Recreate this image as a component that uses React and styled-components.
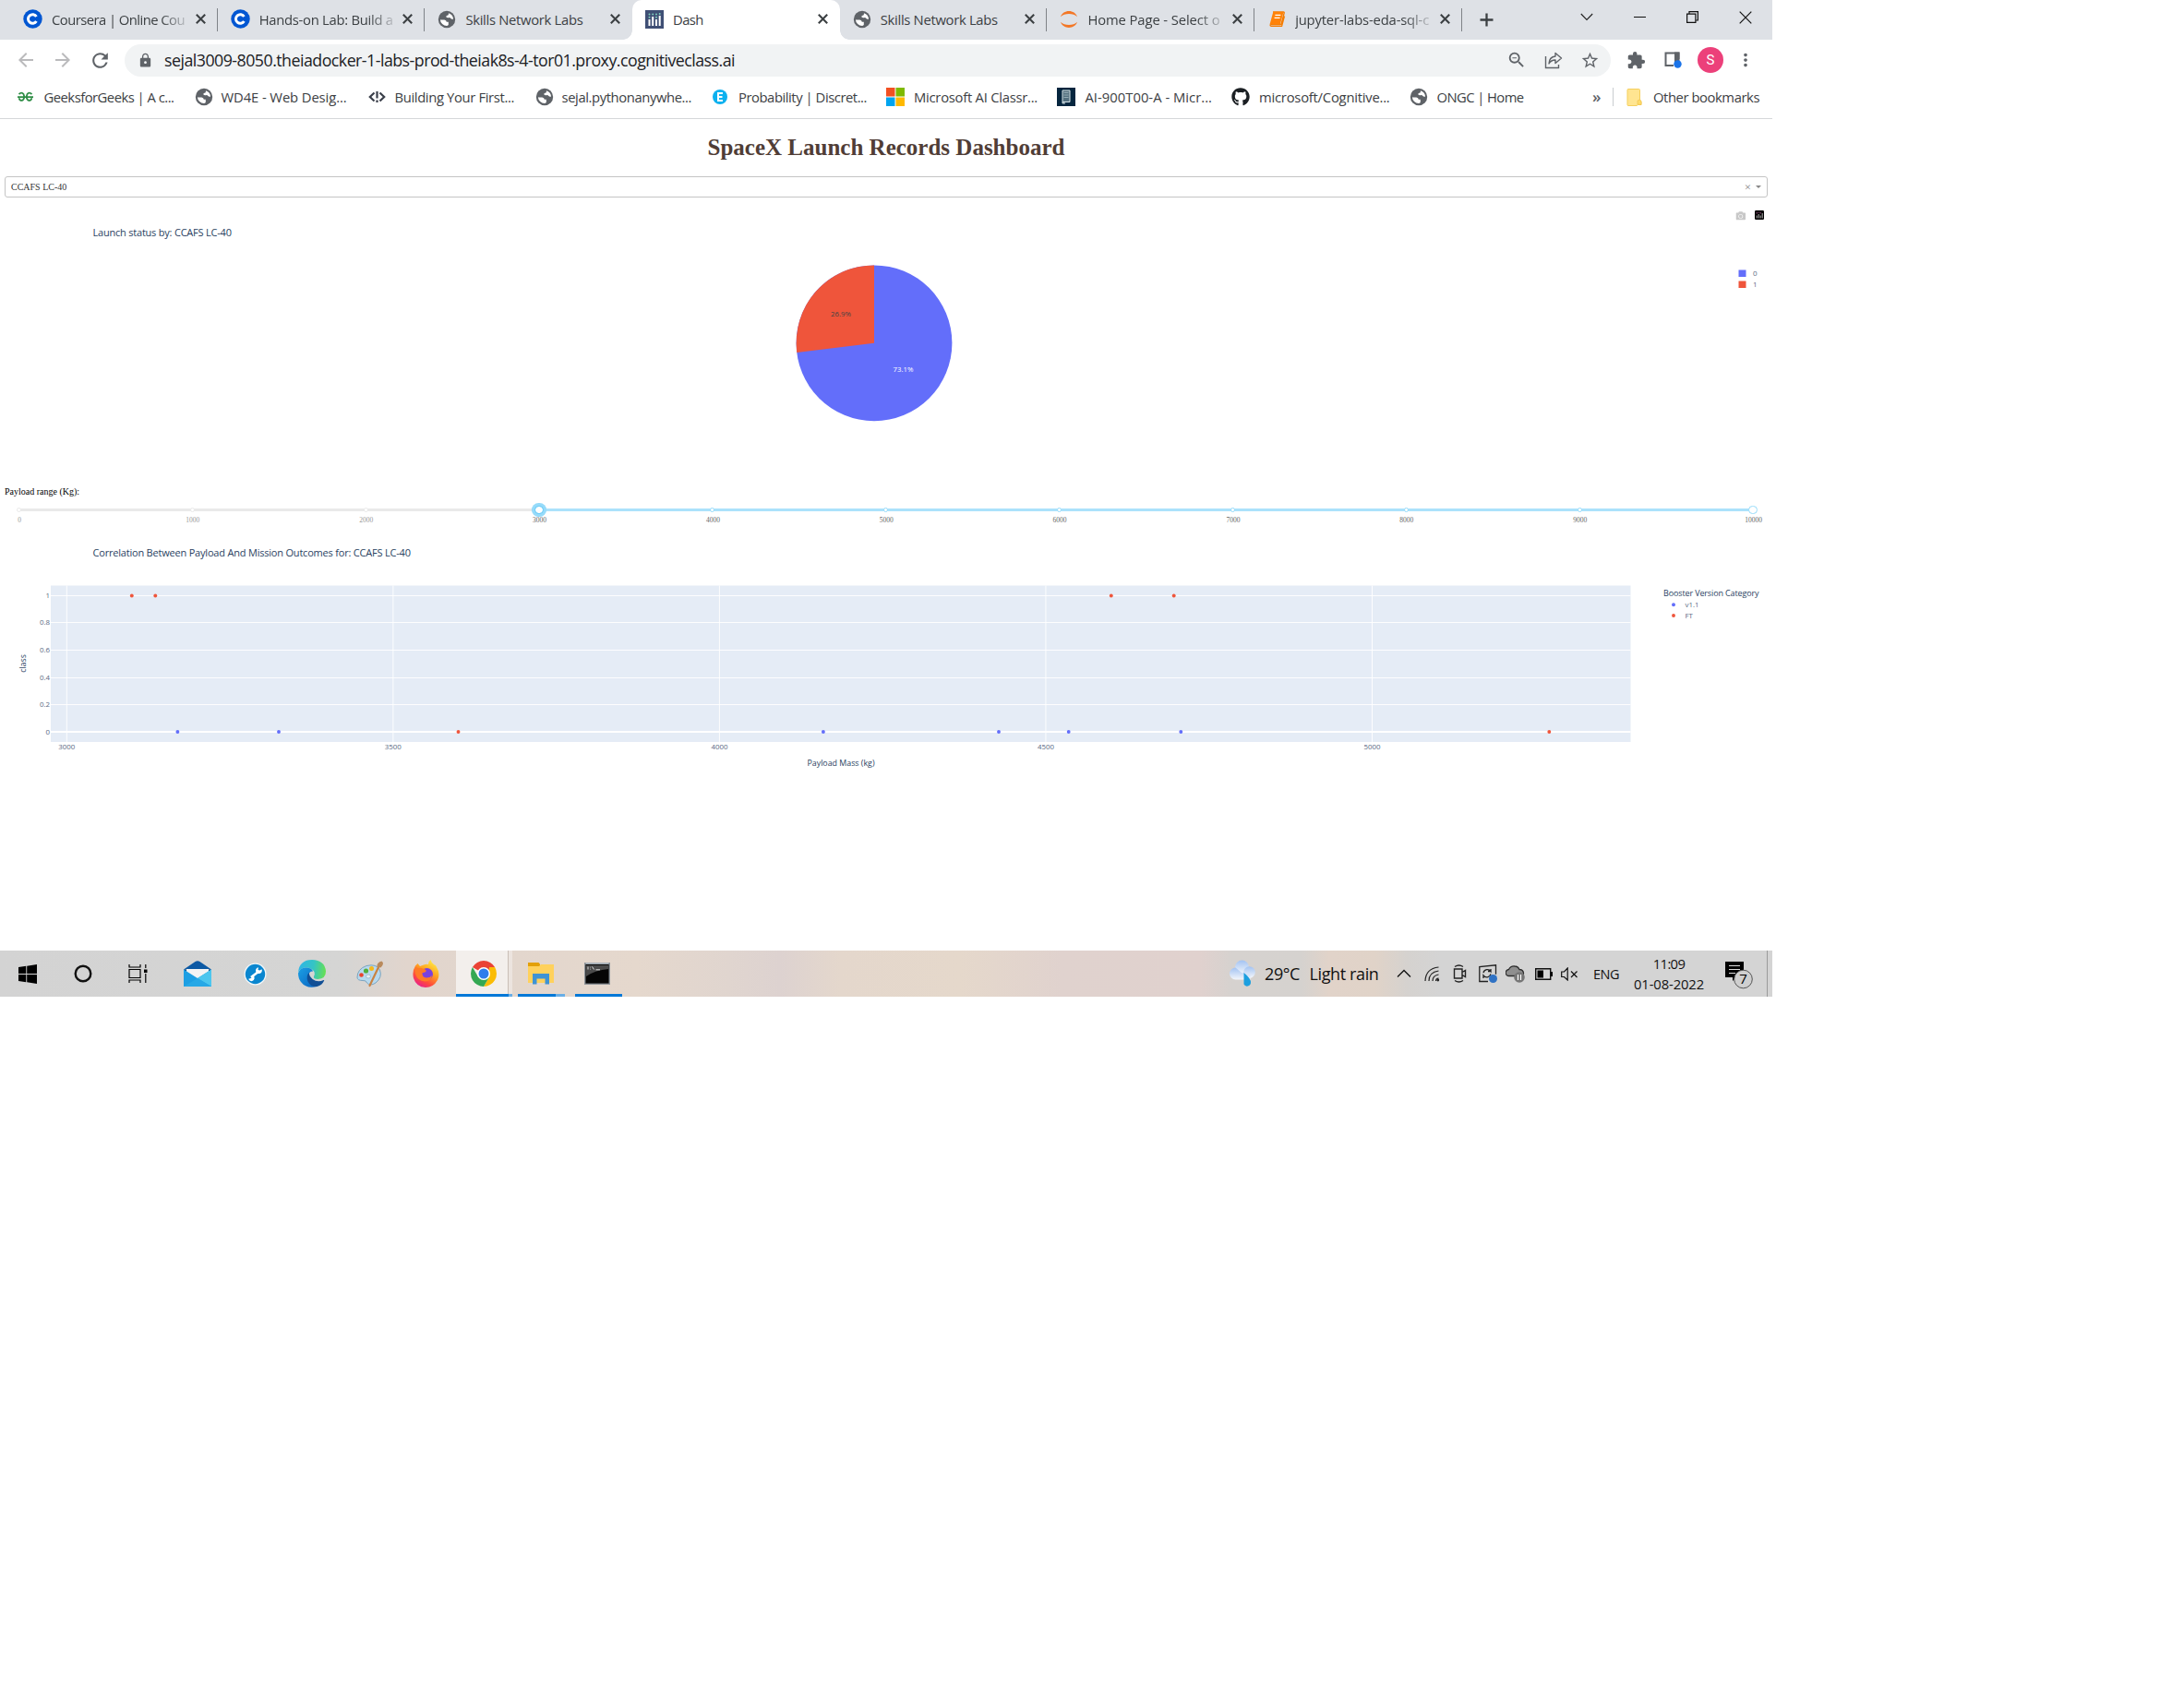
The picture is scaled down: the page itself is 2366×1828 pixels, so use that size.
import React, { useLayoutEffect, useRef, useState } from "react";
import styled, { createGlobalStyle, css } from "styled-components";
import {
  MdArrowBack, MdArrowForward, MdRefresh, MdLock, MdStarBorder,
  MdExtension, MdMoreVert, MdOutlineZoomOut,
} from "react-icons/md";
import { FaGithub, FaCamera } from "react-icons/fa";

const UI = `"Open Sans", "Noto Sans", sans-serif`;
const SERIF = `"Liberation Serif", serif`;

const Global = createGlobalStyle`
  * { box-sizing: border-box; }
  body { margin: 0; background: #fff; font-family: ${UI}; }
  svg { display: block; flex: none; }
`;

const Desktop = styled.div`
  width: 1920px;
  height: 1080px;
  display: flex;
  flex-direction: column;
  background: #fff;
  overflow: hidden;
`;

/* ---------- text that keeps to its column width ---------- */
const FitBox = styled.span`
  display: block;
  flex: none;
  width: ${(p) => p.$w}px;
  white-space: nowrap;
  font-size: ${(p) => p.$size}px;
  color: ${(p) => p.$color || "#3c4043"};
`;
const Glyphs = styled.span`
  display: inline-block;
`;
function FitText({ w, size, color, children }) {
  const ref = useRef(null);
  const [spacing, setSpacing] = useState(0);
  useLayoutEffect(() => {
    const natural = ref.current.getBoundingClientRect().width;
    setSpacing((w - natural) / children.length);
  }, []);
  return (
    <FitBox $w={w} $size={size} $color={color}>
      <Glyphs ref={ref} style={{ letterSpacing: spacing }}>{children}</Glyphs>
    </FitBox>
  );
}

/* ---------- tab strip ---------- */
const TabStrip = styled.div`
  flex: none;
  height: 43px;
  padding-left: 11px;
  display: flex;
  background: #dee1e6;
`;
const Tab = styled.div`
  position: relative;
  width: 224.7px;
  height: 43px;
  padding: 0 10px 2px 14px;
  display: flex;
  align-items: center;
  ${(p) => p.$active && css`
    background: #fff;
    border-radius: 10px 10px 0 0;
    &::before, &::after {
      content: "";
      position: absolute;
      bottom: 0;
      width: 10px;
      height: 10px;
    }
    &::before { left: -10px; background: radial-gradient(circle at 0 0, transparent 9.5px, #fff 10px); }
    &::after { right: -10px; background: radial-gradient(circle at 100% 0, transparent 9.5px, #fff 10px); }
  `}
`;
const TabTitle = styled.div`
  width: 148px;
  margin: 0 6px 0 10px;
  ${(p) => p.$fade && css`
    mask-image: linear-gradient(90deg, #000 118px, rgba(0, 0, 0, 0.25) 144px);
  `}
`;
const TabRule = styled.div`
  position: absolute;
  right: 0;
  top: 9px;
  width: 1px;
  height: 25px;
  background: #7f8388;
`;
const NewTab = styled.div`
  width: 53px;
  padding-bottom: 1px;
  display: grid;
  place-items: center;
`;
const WindowButtons = styled.div`
  margin-left: auto;
  height: 37px;
  display: flex;
`;
const WindowButton = styled.div`
  width: 57.4px;
  display: grid;
  place-items: center;
`;

/* ---------- toolbar ---------- */
const Toolbar = styled.div`
  flex: none;
  height: 44px;
  display: flex;
  align-items: center;
`;
const Nav = styled.div`
  width: 135px;
  padding-left: 15.5px;
  display: flex;
  gap: 16px;
`;
const Omnibox = styled.div`
  width: 1610px;
  height: 35px;
  padding: 0 12px 0 14px;
  border-radius: 18px;
  background: #f1f3f4;
  display: flex;
  align-items: center;
  gap: 12px;
  color: #5f6368;
`;
const OmniActions = styled.div`
  margin-left: auto;
  display: flex;
  align-items: center;
  gap: 19px;
`;
const ToolbarEnd = styled.div`
  padding-left: 17px;
  display: flex;
  align-items: center;
  color: #5f6368;
`;
const SidePanel = styled.div`
  margin-left: 19px;
`;
const Avatar = styled.div`
  width: 28px;
  height: 28px;
  margin: 0 13px 0 17px;
  border-radius: 50%;
  background: #ec407a;
  color: #fff;
  font: 15px Roboto, sans-serif;
  display: grid;
  place-items: center;
`;

/* ---------- bookmarks ---------- */
const Bookmarks = styled.div`
  flex: none;
  height: 42px;
  padding: 0 14px 5px 19px;
  display: flex;
  align-items: center;
  border-bottom: 1px solid #d5d7da;
`;
const Bookmark = styled.div`
  width: ${(p) => p.$w}px;
  flex: none;
  display: flex;
  align-items: center;
`;
const BookmarkIcon = styled.div`
  width: ${(p) => p.$w}px;
  flex: none;
  color: #5f6368;
`;
const Overflow = styled.div`
  width: 10px;
  margin-left: auto;
  font-size: 17px;
  font-weight: 600;
  color: #5f6368;
  line-height: 20px;
`;
const BookmarkRule = styled.div`
  width: 1px;
  height: 20px;
  margin: 0 14px 0 12px;
  background: #c9ccd0;
`;

/* ---------- dashboard ---------- */
const Page = styled.main`
  flex: 1;
  display: flex;
  flex-direction: column;
`;
const Heading = styled.h1`
  margin: 0;
  height: 62px;
  padding-top: 16px;
  text-align: center;
  font: bold 25px/30px ${SERIF};
  color: #503d36;
`;
const Dropdown = styled.div`
  height: 23px;
  margin: 0 5px;
  padding: 0 6px;
  border: 1px solid #c4c4c4;
  border-radius: 3px;
  display: flex;
  align-items: center;
  font: 10px/20px ${SERIF};
  color: #333;
`;
const DropdownControls = styled.div`
  margin-left: auto;
  display: flex;
  align-items: center;
  gap: 5px;
  font: 13px/20px ${SERIF};
  color: #888;
`;
const Caret = styled.div`
  border: 3px solid transparent;
  border-top-color: #888;
  border-bottom: 0;
`;
const SliderLabel = styled.div`
  height: 19px;
  padding-left: 5px;
  font: 10px/20px ${SERIF};
  color: #000;
`;
const Slider = styled.div`
  height: 30px;
  padding: 9px 21px 0 20.5px;
`;
const Rail = styled.div`
  position: relative;
  height: 3px;
  border-radius: 3px;
  background: linear-gradient(90deg, #e9e9e9 30%, #abe2fb 30%);
`;
const Step = styled.div`
  position: absolute;
  left: ${(p) => p.$at}%;
  top: -1px;
  width: 5px;
  height: 5px;
  margin-left: -2.5px;
  border-radius: 50%;
  border: 1.25px solid ${(p) => (p.$on ? "#96dbfa" : "#e9e9e9")};
  background: #fff;
`;
const Handle = styled.div`
  position: absolute;
  left: ${(p) => p.$at}%;
  top: -3.2px;
  width: 9.4px;
  height: 9.4px;
  margin-left: -4.7px;
  border-radius: 50%;
  border: 1.25px solid ${(p) => (p.$focus ? "#57c5f7" : "#96dbfa")};
  background: #fff;
  box-shadow: ${(p) => (p.$focus ? "0 0 0 3.1px #96dbfa" : "none")};
`;
const Mark = styled.div`
  position: absolute;
  left: ${(p) => p.$at}%;
  top: 8px;
  width: 40px;
  margin-left: -19.5px;
  text-align: center;
  font: 7.5px/10px ${SERIF};
  color: ${(p) => (p.$on ? "#666" : "#999")};
`;
const ChartText = styled.text`
  font-family: ${UI};
  font-size: ${(p) => p.$size}px;
  fill: ${(p) => p.$fill || "#2a3f5f"};
  text-anchor: ${(p) => p.$anchor || "start"};
`;

/* ---------- taskbar ---------- */
const Taskbar = styled.div`
  flex: none;
  height: 50px;
  display: flex;
  background: linear-gradient(90deg, #d3d3d3 0, #d5d5d4 370px, #e1d5cd 440px, #e5d8cd 690px,
    #e0d5cf 790px, #ddd2d0 845px, #e4d7cc 910px, #e5d8cb 1040px, #e0d2ce 1150px, #e0d1ce 1300px,
    #d6d2cf 1335px, #d5d2cf 1410px, #e1d3c9 1440px, #e0d3c8 1490px, #d5d2cf 1525px, #d4d4d4 1560px);
`;
const Pinned = styled.div`
  display: flex;
  padding-left: 5px;
`;
const Launcher = styled.div`
  width: ${(p) => p.$w}px;
  padding-left: ${(p) => p.$nudge || 0}px;
  display: grid;
  place-items: center;
`;
const Running = styled.div`
  width: ${(p) => p.$w}px;
  margin-right: ${(p) => p.$gap || 0}px;
  display: flex;
  flex-direction: column;
  align-items: center;
  background: ${(p) => (p.$active ? "linear-gradient(90deg, #f3efec 56px, #c9beb7 56px, #c9beb7 57px, #ece4df 57px)" : "none")};
`;
const RunningIcon = styled.div`
  flex: 1;
  display: grid;
  place-items: center;
  padding-right: ${(p) => p.$shift || 0}px;
  padding-top: 2px;
`;
const Underline = styled.div`
  align-self: stretch;
  height: 3px;
  background: linear-gradient(90deg, #0078d7 ${(p) => p.$main}px, #69aee6 ${(p) => p.$main}px);
`;
const Tray = styled.div`
  margin-left: auto;
  display: flex;
  align-items: center;
`;
const TrayItem = styled.div`
  width: ${(p) => p.$w}px;
  display: grid;
  place-items: center;
`;
const Clock = styled.div`
  width: 93px;
  padding-left: 3px;
  display: flex;
  flex-direction: column;
  align-items: center;
  gap: 2px;
  line-height: 20px;
`;
const Notices = styled.div`
  width: 61px;
  padding: 2px 0 0 16px;
`;
const ShowDesktop = styled.div`
  width: 6px;
  height: 50px;
  border-left: 1px solid #9b9b9b;
`;

/* ---------- favicons ---------- */
const CloseX = () => (
  <svg width="17" height="17" viewBox="0 0 17 17"><path d="m3.800 3.800 9.400 9.400M13.200 3.800 3.800 13.200" stroke="#3c4043" strokeWidth="2.100" /></svg>
);
const Coursera = () => (
  <svg width="21" height="21" viewBox="0 0 21 21">
    <circle cx="10.500" cy="10.500" r="10.200" fill="#0056d2" />
    <path d="M14.400 13A4.800 4.800 0 1 1 14.400 8" fill="none" stroke="#fff" strokeWidth="3" />
  </svg>
);
const Globe = () => (
  <svg width="20" height="20" viewBox="0 0 20 20">
    <circle cx="10" cy="10" r="9.200" fill="#5f6368" />
    <path d="M2.900 10.200q.3 0 .9.200h3.600q2.200.3 2.400 2.400h2v3.200q-.6.400-1.600 1A7.100 7.100 0 0 1 2.900 10.200Z" fill="#fff" />
    <path d="M12 3.200q4.500 1.400 5.100 6.200-1.600.9-2.700-.4-.8-1.200-2.400-.8-2 .2-2.600-.8-.4-1.400 1.200-1.700 1.600 0 1.400-2.500Z" fill="#fff" />
  </svg>
);
const DashIcon = () => (
  <svg width="20" height="20" viewBox="0 0 20 20">
    <rect width="20" height="20" fill="#3f4f75" />
    <g fill="#fff"><rect x="3.500" y="10" width="2" height="7" /><rect x="7.200" y="7" width="2" height="10" /><rect x="11" y="10" width="2" height="7" /><rect x="14.700" y="6" width="2" height="11" /></g>
    <g fill="#80cfbe"><circle cx="4.500" cy="4.500" r="1" /><circle cx="4.500" cy="7.700" r="1" /><circle cx="8.200" cy="4.500" r="1" /><circle cx="12" cy="4.500" r="1" /><circle cx="12" cy="7.700" r="1" /><circle cx="15.700" cy="4" r="1" /></g>
  </svg>
);
const Jupyter = () => (
  <svg width="20" height="20" viewBox="0 0 20 20" fill="#f37726">
    <path d="M1 7.200C2.400 3.200 6 1.100 10 1.100s7.600 2.100 9 6.100C16.800 5 13.600 4 10 4S3.200 5 1 7.200Z" />
    <path d="M1 12.800C2.400 16.800 6 18.900 10 18.900s7.600-2.100 9-6.100C16.800 15 13.600 16 10 16s-6.800-1-9-3.200Z" />
  </svg>
);
const Notebook = () => (
  <svg width="20" height="20" viewBox="0 0 20 20">
    <path d="M6 2h11.500q1 0 .7 1l-3 11.500q-.3 1.100-1.300 1.100H4q-1 0-.9.900t1 .9h11.500l2.900-11" fill="none" stroke="#f57c00" strokeWidth="1.300" />
    <path d="M6.300 2h11.200l-3.600 13.200H2.600Z" fill="#ff8208" />
    <path d="M8.400 5.300h6M7.600 8.300h6" stroke="#fff" strokeWidth="1.200" />
  </svg>
);
const Geeks = () => (
  <svg width="17" height="12" viewBox="0 0 17 12" fill="none" stroke="#2f8d46" strokeWidth="1.800">
    <path d="M1.500 3Q4.500.2 6.500 3 8.200 7 5.800 9.400 2.600 11 1.600 7.200M0 6.200h17M15.500 3q-3-2.800-5 0-1.700 4 .7 6.400 3.200 1.600 4.200-2.200" />
  </svg>
);
const CodeIcon = () => (
  <svg width="19" height="14" viewBox="0 0 19 14" fill="none" stroke="#3a3f4a" strokeWidth="2.200">
    <path d="M6.500 2.500 1.800 7l4.700 4.500M12.500 2.500 17.200 7l-4.700 4.500M9.500 1v7.500M9.500 10.600v2.400" />
  </svg>
);
const EIcon = () => (
  <svg width="16" height="16" viewBox="0 0 16 16">
    <circle cx="8" cy="8" r="8" fill="#0db1ef" />
    <path d="M11 4H6v8h5M6 8h4.500" fill="none" stroke="#fff" strokeWidth="2" />
  </svg>
);
const MsIcon = () => (
  <svg width="20" height="20" viewBox="0 0 20 20">
    <path fill="#f25022" d="M0 0h9.500v9.500H0z" /><path fill="#7fba00" d="M10.500 0H20v9.500h-9.500z" />
    <path fill="#00a4ef" d="M0 10.500h9.500V20H0z" /><path fill="#ffb900" d="M10.500 10.500H20V20h-9.500z" />
  </svg>
);
const BookIcon = () => (
  <svg width="20" height="20" viewBox="0 0 20 20">
    <rect width="20" height="20" fill="#06263f" />
    <path d="M6 3h8v12.500H6ZM6 15.500v1.500h3M14 15.500h-3" fill="#54707f" stroke="#d5e2e6" strokeWidth="1" />
    <path d="M7.500 5.500h5M7.500 8h5M7.500 10.500h5" stroke="#a7bcc4" strokeWidth=".8" />
  </svg>
);
const Folder = () => (
  <svg width="17" height="19" viewBox="0 0 17 19">
    <path d="M1 1.500Q1 .5 2 .5h11.500q1 0 1 1V12l1.500 2v3.500h-3.500L11 18.500H2q-1 0-1-1Z" fill="#ffe591" stroke="#f5cf5d" />
    <path d="M12 17v-4l2.500-1 1.500 2v3.500Z" fill="#ffdc6b" stroke="#eec04a" strokeWidth=".6" />
  </svg>
);

const tabs = [
  { icon: <Coursera />, title: "Coursera | Online Cou", w: 144, fade: true, rule: true },
  { icon: <Coursera />, title: "Hands-on Lab: Build a", w: 145, fade: true, rule: true },
  { icon: <Globe />, title: "Skills Network Labs", w: 127 },
  { icon: <DashIcon />, title: "Dash", w: 32.500, active: true },
  { icon: <Globe />, title: "Skills Network Labs", w: 127, rule: true },
  { icon: <Jupyter />, title: "Home Page - Select o", w: 143, fade: true, rule: true },
  { icon: <Notebook />, title: "jupyter-labs-eda-sql-c", w: 145, fade: true, rule: true },
];

const bookmarks = [
  { icon: <Geeks />, title: "GeeksforGeeks | A c...", iw: 28.500, w: 141, full: 191.500 },
  { icon: <Globe />, title: "WD4E - Web Desig...", iw: 29, w: 136, full: 188 },
  { icon: <CodeIcon />, title: "Building Your First...", iw: 29, w: 129.500, full: 181 },
  { icon: <Globe />, title: "sejal.pythonanywhe...", iw: 29, w: 140.500, full: 192.500 },
  { icon: <EIcon />, title: "Probability | Discret...", iw: 28, w: 139, full: 188 },
  { icon: <MsIcon />, title: "Microsoft AI Classr...", iw: 30, w: 134, full: 185 },
  { icon: <BookIcon />, title: "AI-900T00-A - Micr...", iw: 30.500, w: 137.500, full: 189 },
  { icon: <FaGithub size={20} color="#1b1f23" />, title: "microsoft/Cognitive...", iw: 30, w: 141.500, full: 192.500 },
  { icon: <Globe />, title: "ONGC | Home", iw: 30, w: 94, full: 130 },
];

function Browser() {
  return (
    <>
      <TabStrip>
        {tabs.map((t, i) => (
          <Tab key={i} $active={t.active}>
            {t.icon}
            <TabTitle $fade={t.fade}><FitText w={t.w} size={14.800}>{t.title}</FitText></TabTitle>
            <CloseX />
            {t.rule && <TabRule />}
          </Tab>
        ))}
        <NewTab>
          <svg width="15" height="15" viewBox="0 0 15 15"><path d="M7.500.5v14M.5 7.500h14" stroke="#3c4043" strokeWidth="2.300" /></svg>
        </NewTab>
        <WindowButtons>
          <WindowButton>
            <svg width="14" height="9" viewBox="0 0 14 9" fill="none" stroke="#222" strokeWidth="1.100"><path d="m.8 1 6.200 6.500L13.200 1" /></svg>
          </WindowButton>
          <WindowButton>
            <svg width="13" height="1"><rect width="13" height="1" fill="#111" /></svg>
          </WindowButton>
          <WindowButton>
            <svg width="13" height="13" viewBox="0 0 13 13" fill="none" stroke="#111" strokeWidth="1.200"><path d="M.6 3.100h9.300v9.300H.6ZM3 3V.6h9.400V10H10" /></svg>
          </WindowButton>
          <WindowButton>
            <svg width="14" height="14" viewBox="0 0 14 14" fill="none" stroke="#111" strokeWidth="1.200"><path d="m.7.7 12.600 12.600M13.300.7.7 13.300" /></svg>
          </WindowButton>
        </WindowButtons>
      </TabStrip>

      <Toolbar>
        <Nav>
          <MdArrowBack size={24} color="#bababc" />
          <MdArrowForward size={24} color="#bababc" />
          <MdRefresh size={25} color="#5f6368" />
        </Nav>
        <Omnibox>
          <MdLock size={17} />
          <FitText w={618} size={17.800} color="#202124">
            sejal3009-8050.theiadocker-1-labs-prod-theiak8s-4-tor01.proxy.cognitiveclass.ai
          </FitText>
          <OmniActions>
            <MdOutlineZoomOut size={22} />
            <svg width="20" height="20" viewBox="0 0 20 20" fill="none" stroke="#5f6368" strokeWidth="1.400">
              <path d="M1.500 6v12.500h14V15" /><path d="M12 2.500 18.500 8 12 13.500V10Q7.500 9.800 5 14 5.300 6.800 12 6Z" strokeLinejoin="round" />
            </svg>
            <MdStarBorder size={21} />
          </OmniActions>
        </Omnibox>
        <ToolbarEnd>
          <MdExtension size={21} />
          <SidePanel>
            <svg width="20" height="20" viewBox="0 0 20 20">
              <path d="M2.500 2.500h14V9M2.500 1.500v14.500H11" fill="none" stroke="#5f6368" strokeWidth="2" />
              <path d="M12 1.500h5.500V12H12Z" fill="#5f6368" />
              <circle cx="15.500" cy="14.500" r="4.200" fill="#1a73e8" />
            </svg>
          </SidePanel>
          <Avatar>S</Avatar>
          <MdMoreVert size={22} />
        </ToolbarEnd>
      </Toolbar>

      <Bookmarks>
        {bookmarks.map((b, i) => (
          <Bookmark key={i} $w={b.full}>
            <BookmarkIcon $w={b.iw}>{b.icon}</BookmarkIcon>
            <FitText w={b.w} size={14.800}>{b.title}</FitText>
          </Bookmark>
        ))}
        <Overflow>»</Overflow>
        <BookmarkRule />
        <Bookmark $w={144}>
          <BookmarkIcon $w={29}><Folder /></BookmarkIcon>
          <FitText w={115} size={14.800}>Other bookmarks</FitText>
        </Bookmark>
      </Bookmarks>
    </>
  );
}

const BLUE = "#636efa";
const RED = "#ef553b";

function PieGraph() {
  return (
    <svg width="1920" height="309" viewBox="0 214 1920 309">
      <g transform="translate(1880.500 228.500)"><FaCamera size={10.500} color="#c8c8c8" /></g>
      <rect x="1901" y="228" width="10" height="10" rx="1.200" fill="#000" />
      <path d="M1903.200 233.500v3M1905.200 232v4.500M1907.200 233.500v3M1909.200 231v5.500" stroke="#ddd" strokeWidth=".8" />
      <path d="M1903.200 230v1.500M1905.200 229.700v1M1907.200 230v1.500" stroke="#c66aa8" strokeWidth=".8" />
      <ChartText x="100.500" y="256.300" $size={11} textLength="150.500">Launch status by: CCAFS LC-40</ChartText>
      <circle cx="947" cy="371.800" r="84.400" fill={BLUE} />
      <path d="M947 371.800 L863.210 381.970 A84.400 84.400 0 0 1 947 287.400 Z" fill={RED} />
      <ChartText x="911" y="343.300" $size={7.800} $anchor="middle" $fill="#444">26.9%</ChartText>
      <ChartText x="978.500" y="403.300" $size={7.800} $anchor="middle" $fill="#fff">73.1%</ChartText>
      <rect x="1883.500" y="292.500" width="8" height="7.500" fill={BLUE} />
      <rect x="1883.500" y="304.500" width="8" height="7.500" fill={RED} />
      <ChartText x="1899" y="299.300" $size={8} $fill="#5a6a84">0</ChartText>
      <ChartText x="1899" y="311.300" $size={8} $fill="#5a6a84">1</ChartText>
    </svg>
  );
}

const px = (kg) => 72.3 + ((kg - 3000) * 707.1) / 1000;
const points = [
  [142.8, 1, RED], [168.3, 1, RED], [1203.8, 1, RED], [1271.7, 1, RED],
  [192.4, 0, BLUE], [302, 0, BLUE], [891.9, 0, BLUE], [1082, 0, BLUE], [1157.7, 0, BLUE], [1279.3, 0, BLUE],
  [496.5, 0, RED], [1678.3, 0, RED],
];
const yTicks = [["1", 645.5], ["0.8", 674.5], ["0.6", 704.5], ["0.4", 734.5], ["0.2", 763.5], ["0", 793]];

function ScatterGraph() {
  return (
    <svg width="1920" height="300" viewBox="0 572 1920 300">
      <ChartText x="100.500" y="602.800" $size={11} textLength="344.500">
        Correlation Between Payload And Mission Outcomes for: CCAFS LC-40
      </ChartText>
      <rect x="55" y="634.500" width="1711.500" height="169.500" fill="#e5ecf6" />
      {[3000, 3500, 4000, 4500, 5000].map((kg) => (
        <g key={kg}>
          <path d={`M${px(kg)} 634.5V804`} stroke="#fff" strokeWidth=".9" />
          <ChartText x={px(kg)} y="812" $size={7.900} $anchor="middle" $fill="#5a6a84">{kg}</ChartText>
        </g>
      ))}
      {yTicks.map(([label, y]) => (
        <g key={label}>
          <path d={`M55 ${y}H1766.5`} stroke="#fff" strokeWidth={label === "0" ? 2 : 0.9} />
          <ChartText x="54" y={y + 2.9} $size={7.900} $anchor="end" $fill="#5a6a84">{label}</ChartText>
        </g>
      ))}
      {points.map(([x, cls, color]) => (
        <circle key={x} cx={x} cy={cls ? 645.5 : 793} r="1.950" fill={color} />
      ))}
      <ChartText transform="translate(28 719) rotate(-90)" $size={8.750} $anchor="middle">class</ChartText>
      <ChartText x="911" y="829.500" $size={8.900} $anchor="middle" textLength="73">Payload Mass (kg)</ChartText>
      <ChartText x="1802" y="645.800" $size={9} textLength="103.500">Booster Version Category</ChartText>
      <circle cx="1813" cy="655.200" r="1.950" fill={BLUE} />
      <circle cx="1813" cy="667" r="1.950" fill={RED} />
      <ChartText x="1825.500" y="658" $size={7.900} $fill="#5a6a84">v1.1</ChartText>
      <ChartText x="1825.500" y="669.900" $size={7.900} $fill="#5a6a84">FT</ChartText>
    </svg>
  );
}

function Dashboard() {
  const marks = Array.from({ length: 11 }, (_, i) => i);
  return (
    <Page>
      <Heading>SpaceX Launch Records Dashboard</Heading>
      <Dropdown>
        CCAFS LC-40
        <DropdownControls>×<Caret /></DropdownControls>
      </Dropdown>
      <PieGraph />
      <SliderLabel>Payload range (Kg):</SliderLabel>
      <Slider>
        <Rail>
          {marks.map((m) => (
            <React.Fragment key={m}>
              <Step $at={m * 10} $on={m >= 3} />
              <Mark $at={m * 10} $on={m >= 3}>{m * 1000}</Mark>
            </React.Fragment>
          ))}
          <Handle $at={30} $focus />
          <Handle $at={100} />
        </Rail>
      </Slider>
      <ScatterGraph />
    </Page>
  );
}

/* ---------- taskbar icons ---------- */
const WindowsLogo = () => (
  <svg width="20" height="21" viewBox="0 0 20 21" fill="#000">
    <path d="M0 3 8.300 1.800V10H0ZM9.200 1.700 20 0v10H9.200ZM0 11h8.300v8.200L0 18ZM9.200 11H20v10L9.200 19.300Z" />
  </svg>
);
const CortanaRing = () => (
  <svg width="20" height="20" viewBox="0 0 20 20"><circle cx="10" cy="10" r="8.300" fill="none" stroke="#111" strokeWidth="2.400" /></svg>
);
const TaskView = () => (
  <svg width="21" height="20" viewBox="0 0 21 20" fill="none" stroke="#000" strokeWidth="1.200">
    <path d="M1 5.500h12v9H1ZM1 0v3h12V0M1 20v-3h12v3M18.800 0v4M18.800 10v10" /><path d="M17 5.500h3.500v3.500H17Z" fill="#000" stroke="none" />
  </svg>
);
const MailIcon = () => (
  <svg width="30" height="28" viewBox="0 0 30 28">
    <path d="M0 9.500 12.500 1Q15-.7 17.500 1L30 9.500Z" fill="#0c59a4" /><path d="M0 9.500h30v8H0Z" fill="#0a4a8c" /><path d="M3 9h24v8l-12 6-12-6Z" fill="#f4f4f4" />
    <path d="M0 9.500 15 19 30 9.500V28H0Z" fill="#1d9fe3" /><path d="M30 9.500V28L15 19Z" fill="#4cc6ee" /><path d="M15 19 30 28H0Z" fill="#27a8e6" />
  </svg>
);
const WrenchIcon = () => (
  <svg width="25" height="25" viewBox="0 0 25 25">
    <circle cx="12.500" cy="12.500" r="12" fill="#f2f8fb" /><circle cx="12.500" cy="12.500" r="10.700" fill="#0a86cf" />
    <path d="m8 16 8.500-6.500" stroke="#fff" strokeWidth="2.600" />
    <path d="M19.500 7.200a3.400 3.400 0 1 1-3.600-1.900l-.4 2.600 1.900.6ZM5.200 17.800a3.300 3.300 0 1 0 3.900-4.200l.2 2.500-1.700 1Z" fill="#fff" />
  </svg>
);
const EdgeIcon = () => (
  <svg width="30" height="30" viewBox="0 0 30 30">
    <defs>
      <linearGradient id="edgeTop" x1="0" y1=".4" x2="1" y2=".5"><stop offset="0" stopColor="#2fb6e6" /><stop offset=".55" stopColor="#35c4c4" /><stop offset="1" stopColor="#66e052" /></linearGradient>
      <linearGradient id="edgeSide" x1="0" y1="0" x2="1" y2="1"><stop offset="0" stopColor="#1ba0e4" /><stop offset="1" stopColor="#0a62c0" /></linearGradient>
    </defs>
    <path d="M0 13.500Q1.500 0 15 0q14 .5 15 12.500 0 8-8.500 8.500-5.500 0-4.500-3 2.500-5-2.500-8Q5 6 0 13.500Z" fill="url(#edgeTop)" />
    <path d="M0 14.500Q2.500 7.500 9.500 8.500q5.500.5 6.500 4-5.500 0-5 7 1 7 9.500 9.500Q9 32 3 24 0 20 0 14.500Z" fill="url(#edgeSide)" />
    <path d="M12.200 13.500q-4 4-1.700 10 3 6 10 5.500 5.500-1.500 7.700-6.500.2-.7-.6-.5-6.600 3-12-1-4.400-4-3.400-7.500Z" fill="#114f95" />
  </svg>
);
const PaintIcon = () => (
  <svg width="30" height="30" viewBox="0 0 30 30">
    <path d="M1 19Q1 10 11 6.500 22 4 25.500 11q3 8-4.500 14-6 4-9.500 0-1-3-4.500-2.500Q1 22.500 1 19Z" fill="#b7d9ee" stroke="#7ba4bf" />
    <circle cx="5.500" cy="16.500" r="2.300" fill="#e8442e" /><circle cx="10.500" cy="12" r="2.600" fill="#52ae3b" /><circle cx="16.500" cy="9.500" r="2.500" fill="#f6b81d" /><ellipse cx="13" cy="18" rx="2.500" ry="2" fill="#e6eef2" stroke="#8fb0c5" strokeWidth=".7" />
    <path d="M14.500 28 24.500 7" stroke="#c98343" strokeWidth="2.200" strokeLinecap="round" /><path d="M22.500 7.500Q22 3 27.500 1.500 31 4 26.500 8.500Z" fill="#b98a5c" />
  </svg>
);
const FirefoxIcon = () => (
  <svg width="29" height="30" viewBox="0 0 29 30">
    <defs>
      <linearGradient id="fox" x1=".85" y1=".05" x2=".3" y2="1"><stop offset="0" stopColor="#fff04a" /><stop offset=".4" stopColor="#ffa51f" /><stop offset=".75" stopColor="#ff4a3d" /><stop offset="1" stopColor="#e8208c" /></linearGradient>
    </defs>
    <path d="M3 6.500 5.500 4 8 7l4-1.500q2.500-1 5-.5Q17 1.500 19.500 0q.5 3 4 5.500 1-.5 2 1.500 5 8 1.500 15-4.500 8-13 8Q4 29.500 1 20-.8 12.500 3 6.500Z" fill="url(#fox)" />
    <circle cx="15.500" cy="15.500" r="6.500" fill="#7b41dd" />
    <path d="M3 7.500q2 2 6.500 1.500 4 .5 5.500 3-1 2-4.500 2.300-.5 4.700 4.500 5.200 4 0 6-2.500-1 6-7.500 6.500Q5 23 3 15Z" fill="#ff7a26" />
  </svg>
);
const ChromeIcon = () => (
  <svg width="28" height="28" viewBox="0 0 28 28">
    <path d="M14 14 1.900 7A14 14 0 0 1 26.100 7Z" fill="#ea4335" />
    <path d="M26.100 7A14 14 0 0 1 14 28l6-10.500V7Z" fill="#fbbc05" /><path d="M1.900 7A14 14 0 0 0 14 28l6.100-10.500L14 20 8 17.500Z" fill="#34a853" />
    <circle cx="14" cy="14" r="7" fill="#fff" /><circle cx="14" cy="14" r="5.500" fill="#2f7dec" />
  </svg>
);
const ExplorerIcon = () => (
  <svg width="28" height="24" viewBox="0 0 28 24">
    <path d="M0 0h11.500L13 1.500v4H0Z" fill="#e3a008" /><path d="M0 4h12l2-2h14v20H0Z" fill="#ffd15c" />
    <path d="M5 12h18v11.500h-4.500v-6h-9v6H5Z" fill="#3f93d4" />
  </svg>
);
const CmdIcon = () => (
  <svg width="28" height="24" viewBox="0 0 28 24">
    <rect x=".7" y=".7" width="26.600" height="22.600" fill="#050505" stroke="#8e9499" strokeWidth="1.400" />
    <rect x="1.400" y="0" width="25.200" height="2" fill="#a9b1b8" /><path d="M2 3h24v4Q12 8 2 15Z" fill="#4a4a4a" />
    <path d="M4 4.500v3M6.500 4.800v.6M6.500 6.800v.6M8.500 4.500l2 3M12.500 7.800H17" stroke="#eee" strokeWidth=".9" />
  </svg>
);
const WeatherIcon = () => (
  <svg width="28" height="30" viewBox="0 0 28 30">
    <defs><linearGradient id="cloud" x1="0" y1="0" x2="0" y2="1"><stop offset="0" stopColor="#a3c3f2" /><stop offset="1" stopColor="#f3f6fb" /></linearGradient></defs>
    <circle cx="13.500" cy="8" r="7.500" fill="url(#cloud)" /><circle cx="21.500" cy="13.500" r="6.300" fill="url(#cloud)" /><path d="M6.500 8.500a6.500 6.500 0 0 0 0 13h16V16L13 14Z" fill="url(#cloud)" />
    <path d="M15.500 14q8 6.500 7.500 11a4 4 0 0 1-7.500 1.500Z" fill="#1c9fdf" />
  </svg>
);

function TaskbarView() {
  return (
    <Taskbar>
      <Pinned>
        <Launcher $w={50}><WindowsLogo /></Launcher>
        <Launcher $w={70}><CortanaRing /></Launcher>
        <Launcher $w={49}><TaskView /></Launcher>
        <Launcher $w={80}><MailIcon /></Launcher>
        <Launcher $w={44}><WrenchIcon /></Launcher>
        <Launcher $w={80}><EdgeIcon /></Launcher>
        <Launcher $w={44} $nudge={1}><PaintIcon /></Launcher>
        <Launcher $w={72} $nudge={7}><FirefoxIcon /></Launcher>
      </Pinned>
      <Running $w={61} $gap={6} $active>
        <RunningIcon $shift={2}><ChromeIcon /></RunningIcon>
        <Underline $main={57} />
      </Running>
      <Running $w={51} $gap={11}>
        <RunningIcon $shift={1}><ExplorerIcon /></RunningIcon>
        <Underline $main={41} />
      </Running>
      <Running $w={51}>
        <RunningIcon $shift={3}><CmdIcon /></RunningIcon>
        <Underline $main={51} />
      </Running>
      <Tray>
        <TrayItem $w={39}><WeatherIcon /></TrayItem>
        <TrayItem $w={48}><FitText w={38} size={18} color="#111">29°C</FitText></TrayItem>
        <TrayItem $w={86}><FitText w={75} size={18} color="#111">Light rain</FitText></TrayItem>
        <TrayItem $w={43}>
          <svg width="16" height="10" viewBox="0 0 16 10" fill="none" stroke="#111" strokeWidth="1.300"><path d="m1 8.500 7-7 7 7" /></svg>
        </TrayItem>
        <TrayItem $w={19}>
          <svg width="17" height="17" viewBox="0 0 17 17" fill="none" stroke="#222" strokeWidth="1.200">
            <path d="M1 16Q1.500 2.500 15.500 1M5 16Q5 6.500 15.500 5M9 16q0-6 6.500-7" /><path d="M12.500 16q0-2.700 3-3" /><circle cx="14.800" cy="15" r="1.400" fill="#222" stroke="none" />
          </svg>
        </TrayItem>
        <TrayItem $w={41}>
          <svg width="16" height="20" viewBox="0 0 16 20" fill="none" stroke="#222" strokeWidth="1.400">
            <path d="M1.500 5h8.500v10H1.500ZM10 8.500l3.500-2v7l-3.500-2M2 2.500Q6.500-.5 11 2.500M2 17.500q4.500 3 9 0" />
          </svg>
        </TrayItem>
        <TrayItem $w={18}>
          <svg width="20" height="20" viewBox="0 0 20 20" fill="none" stroke="#222" strokeWidth="1.300">
            <path d="M10 18.500H.8v-16L18.500.8v10" /><path d="M5 9a4.500 4.500 0 0 1 8-1.500V5M13 7.500h-3M13 10.500a4.500 4.500 0 0 1-8 1.500v3" /><circle cx="15.500" cy="15.500" r="4.500" fill="#2f72c4" stroke="none" />
          </svg>
        </TrayItem>
        <TrayItem $w={43}>
          <svg width="21" height="20" viewBox="0 0 21 20">
            <path d="M4 12.500a3.500 3.500 0 0 1-.5-7Q5.500 1.500 10 2q3.500 0 5 3.500 4 0 4.500 4 0 3-3 3Z" fill="#8f8f8f" stroke="#2c2c2c" strokeWidth="1.300" />
            <circle cx="15" cy="14" r="5.800" fill="#767676" /><path d="M13.500 11v6M16.500 11v6" stroke="#fff" strokeWidth="1.200" />
          </svg>
        </TrayItem>
        <TrayItem $w={18}>
          <svg width="19" height="13" viewBox="0 0 19 13"><path d="M.7.7h16v11.600H.7Z" fill="none" stroke="#111" strokeWidth="1.400" /><path d="M2.500 2.500H9v8H2.500Z" /><path d="M17 4h2v5h-2Z" /></svg>
        </TrayItem>
        <TrayItem $w={39}>
          <svg width="19" height="15" viewBox="0 0 19 15" fill="none" stroke="#111" strokeWidth="1.200"><path d="M.7 5h2.800L7.200 1v13L3.500 10.500H.7ZM11 4.500l6.500 6.500M17.500 4.500 11 11" /></svg>
        </TrayItem>
        <TrayItem $w={40}><FitText w={28} size={14.500} color="#111">ENG</FitText></TrayItem>
        <Clock>
          <FitText w={34.500} size={14.800} color="#111">11:09</FitText>
          <FitText w={76} size={14.800} color="#111">01-08-2022</FitText>
        </Clock>
        <Notices>
          <svg width="31" height="32" viewBox="0 -1 31 32">
            <path d="M0 1h20v17h-8l-4 4v-4H0Z" fill="#000" /><path d="M4 5.500h12M4 9.500h12M4 13.500h7" stroke="#ddd" strokeWidth="1.200" />
            <circle cx="19.500" cy="20" r="9.800" fill="#cfcfcf" stroke="#555" />
            <ChartText x="19.500" y="25.300" $size={15} $anchor="middle" $fill="#000">7</ChartText>
          </svg>
        </Notices>
        <ShowDesktop />
      </Tray>
    </Taskbar>
  );
}

export default function App() {
  return (
    <Desktop>
      <Global />
      <Browser />
      <Dashboard />
      <TaskbarView />
    </Desktop>
  );
}
